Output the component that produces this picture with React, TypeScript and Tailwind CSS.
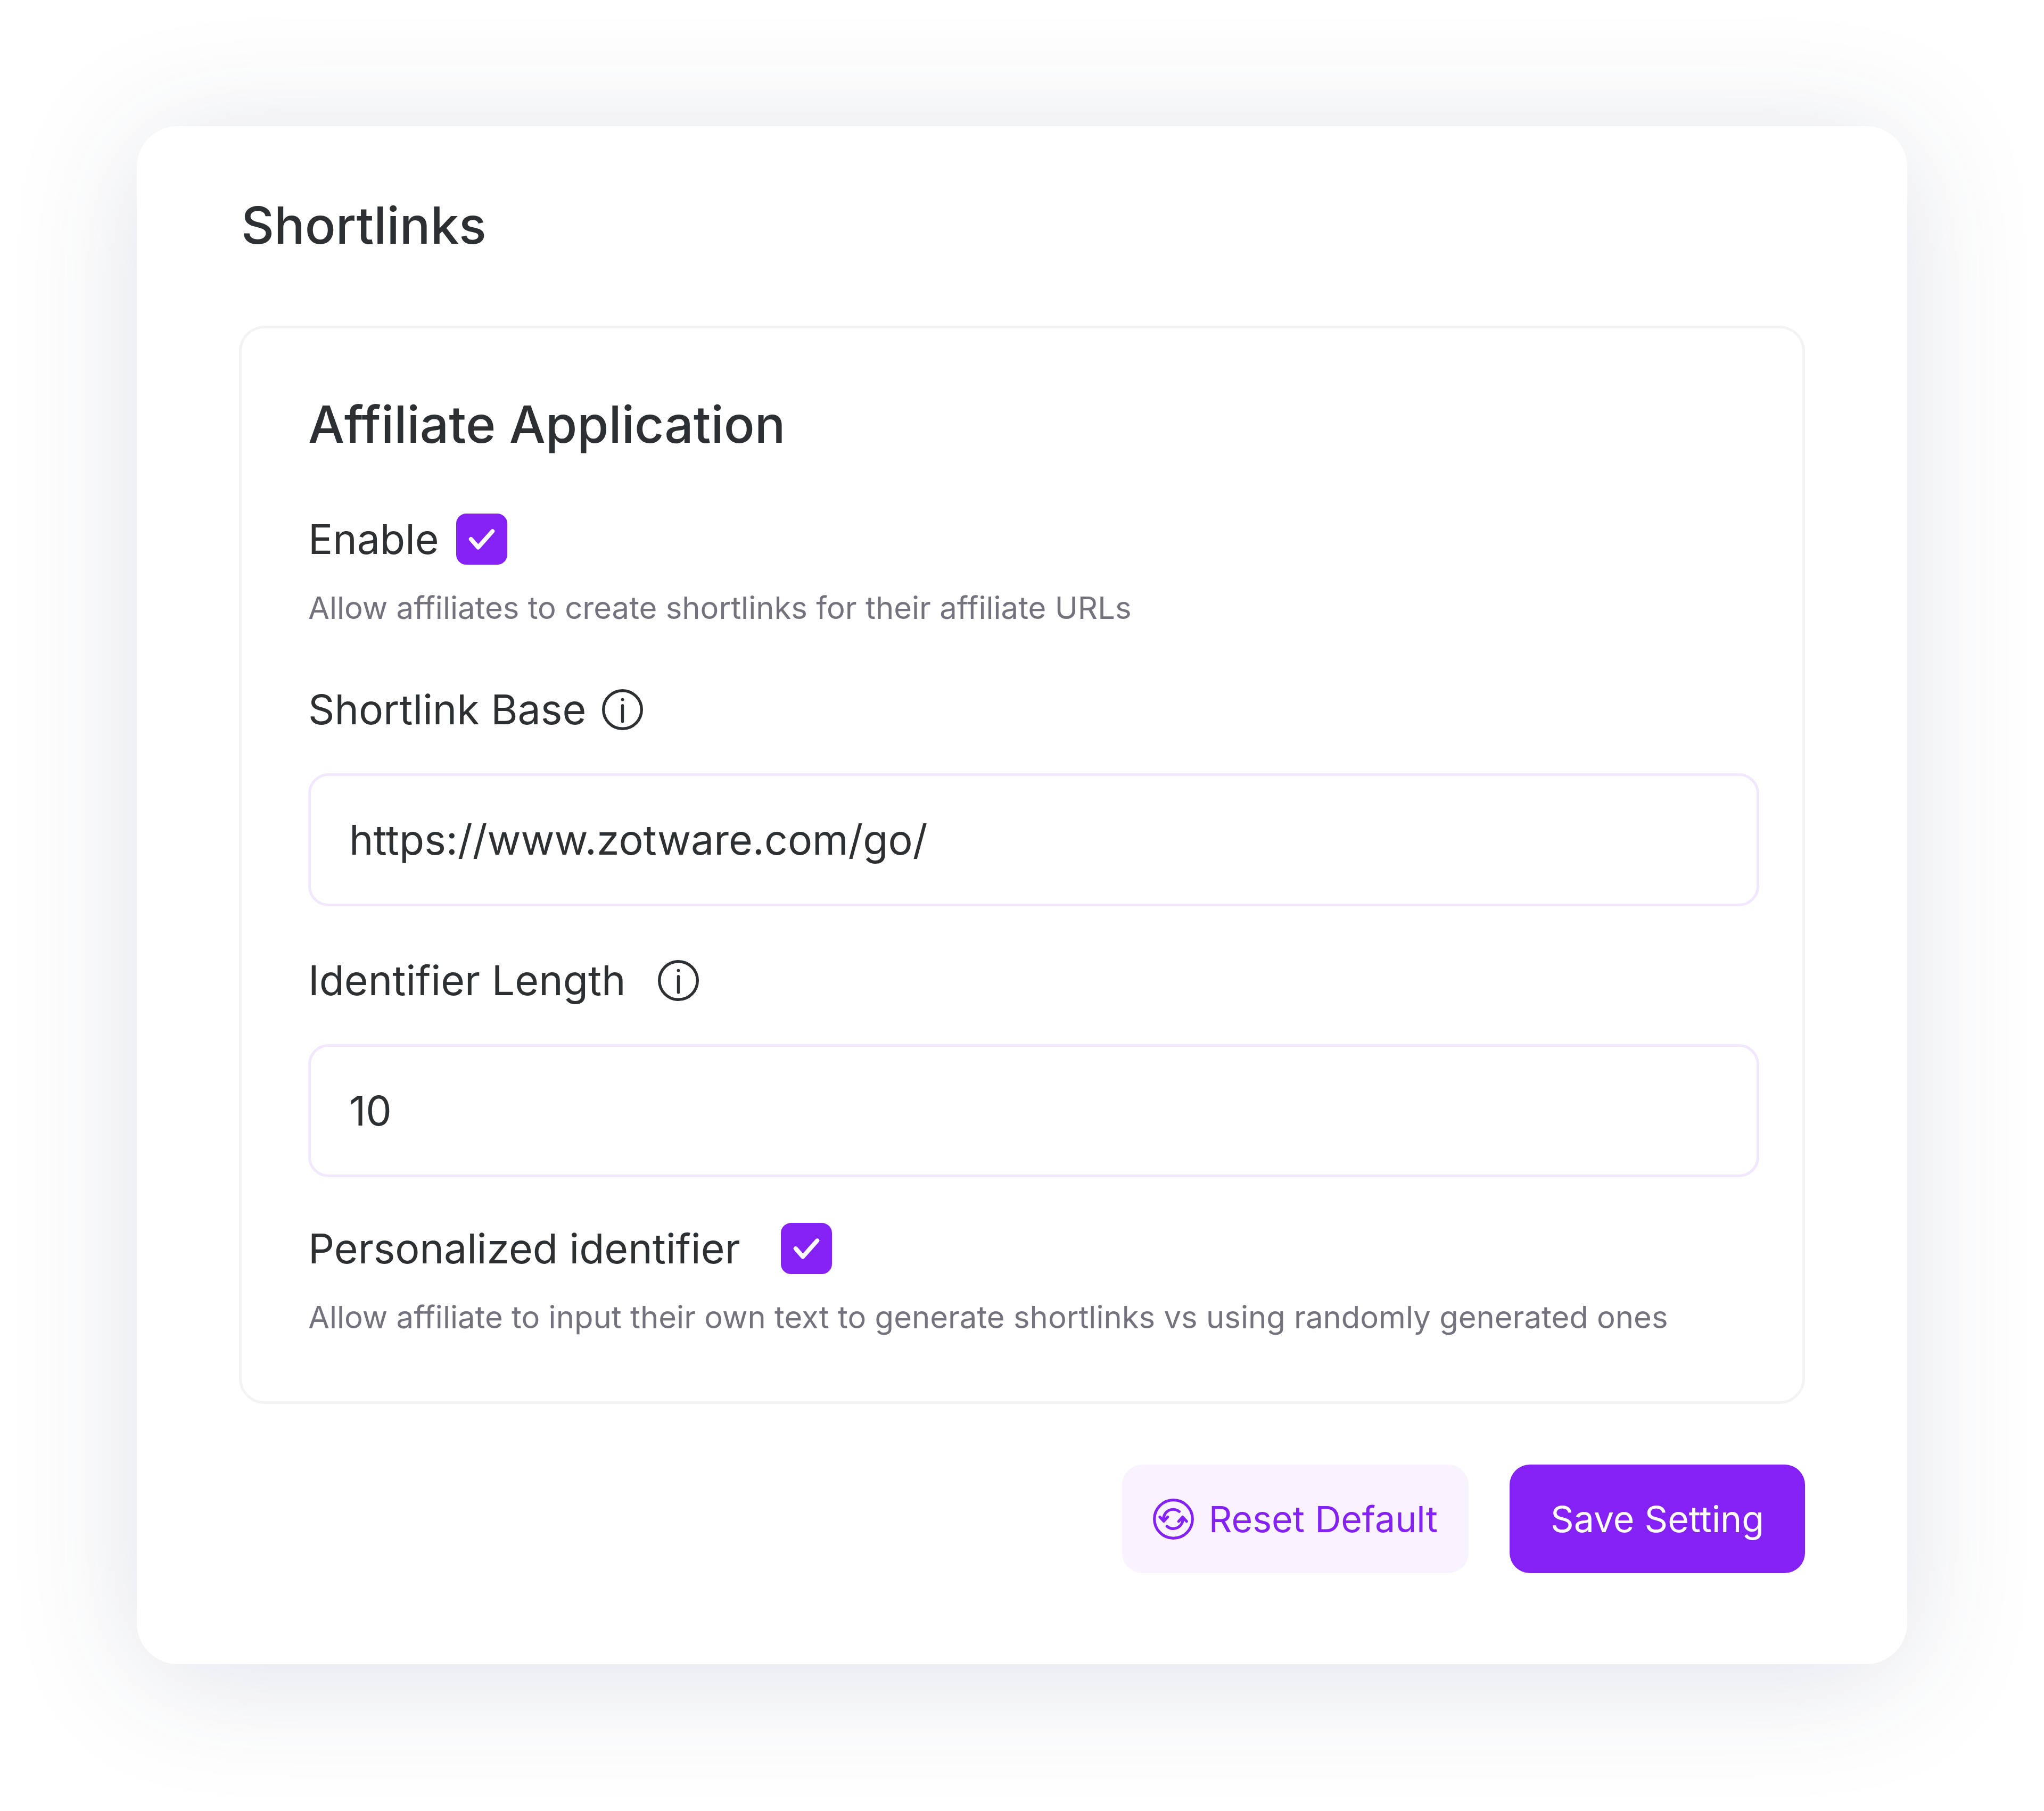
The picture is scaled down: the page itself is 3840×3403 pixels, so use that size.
import { useState } from 'react';
import type { ReactNode } from 'react';

const DEFAULT_SETTINGS = {
    enabled: true,
    base: 'https://www.zotware.com/go/',
    identifierLength: '10',
    personalized: true,
};

const InfoIcon = () => (
    <svg className="size-[77px] shrink-0" viewBox="0 0 77 77" fill="none" aria-hidden="true">
        <circle cx="38.5" cy="38.5" r="35.8" stroke="currentColor" strokeWidth="5.4" />
        <circle cx="38.5" cy="19.6" r="2.9" fill="currentColor" />
        <path d="M38.5 30.7V60.8" stroke="currentColor" strokeWidth="5.4" strokeLinecap="round" />
    </svg>
);

const ResetIcon = () => (
    <svg
        className="size-[77px] shrink-0"
        viewBox="0 0 77 77"
        fill="none"
        stroke="currentColor"
        strokeWidth="5.2"
        strokeLinecap="round"
        strokeLinejoin="round"
        aria-hidden="true"
    >
        <circle cx="38.5" cy="38.5" r="35.8" />
        <path d="M49.3 24.3A18 18 0 0 0 20.3 42" />
        <path d="M13 34.5L20.3 42.6L27.7 34.5" />
        <path d="M26.3 52A18 18 0 0 0 56 36" />
        <path d="M48.3 42.8L55.8 34.6L63.2 42.8" />
    </svg>
);

interface CheckboxProps {
    id: string;
    checked: boolean;
    onChange: (checked: boolean) => void;
}

const Checkbox = ({ id, checked, onChange }: CheckboxProps) => (
    <span className="relative flex size-24 shrink-0">
        <input
            id={id}
            type="checkbox"
            checked={checked}
            onChange={e => onChange(e.target.checked)}
            className="size-24 cursor-pointer appearance-none rounded-[19px] border-[5px] border-[#8422f5] bg-white checked:bg-[#8422f5]"
        />
        {checked && (
            <svg
                className="pointer-events-none absolute inset-0 size-24 text-white"
                viewBox="0 0 96 96"
                fill="none"
                aria-hidden="true"
            >
                <path
                    d="M27.8 48L41.3 63.5L68.3 33.2"
                    stroke="currentColor"
                    strokeWidth="8"
                    strokeLinecap="round"
                    strokeLinejoin="round"
                />
            </svg>
        )}
    </span>
);

interface TextFieldProps {
    id: string;
    label: string;
    value: string;
    rowClass: string;
    onChange: (value: string) => void;
}

const TextField = ({ id, label, value, rowClass, onChange }: TextFieldProps) => (
    <div>
        <div className={`flex items-center ${rowClass}`}>
            <label htmlFor={id} className="text-[77px] leading-[93px]">{label}</label>
            <InfoIcon />
        </div>
        <input
            id={id}
            type="text"
            value={value}
            onChange={e => onChange(e.target.value)}
            className="mt-[73px] block h-[250px] w-full rounded-[38px] border-[5px] border-[#f1e7ff] bg-transparent px-[72px] text-[77px] leading-[93px] outline-none focus:border-[#8422f5]"
        />
    </div>
);

const HelpText = ({ children }: { children: ReactNode }) => (
    <p className="mt-[46px] text-[58px] leading-[70px] text-[#75727d]">{children}</p>
);

export default function App() {

    const [settings, setSettings] = useState(DEFAULT_SETTINGS);

    return (
        <main className="min-h-screen bg-white px-[257px] pt-[237px] pb-[276px] font-['Inter',sans-serif] text-[#2c3033]">
            <form
                className="rounded-[77px] bg-white px-48 pt-32 pb-[171px] shadow-[0_24px_240px_rgba(38,55,95,0.15)]"
                onSubmit={e => e.preventDefault()}
            >
                <h1 className="pl-1 text-[96px] leading-[116px] font-medium">Shortlinks</h1>

                <section className="mt-[131px] rounded-[48px] border-[5px] border-[#f3f3f4] pt-[122px] pr-[81px] pb-[123px] pl-[125px]">
                    <h2 className="text-[96px] leading-[116px] font-medium">Affiliate Application</h2>

                    <div className="mt-[110px] flex items-center gap-8">
                        <label htmlFor="enable" className="text-[77px] leading-[93px]">Enable</label>
                        <Checkbox
                            id="enable"
                            checked={settings.enabled}
                            onChange={enabled => setSettings({ ...settings, enabled })}
                        />
                    </div>
                    <HelpText>Allow affiliates to create shortlinks for their affiliate URLs</HelpText>

                    <div className="mt-[110px] flex flex-col gap-[93px]">
                        <TextField
                            id="shortlink-base"
                            label="Shortlink Base"
                            value={settings.base}
                            rowClass="gap-[30px]"
                            onChange={base => setSettings({ ...settings, base })}
                        />
                        <TextField
                            id="identifier-length"
                            label="Identifier Length"
                            value={settings.identifierLength}
                            rowClass="gap-[60px]"
                            onChange={identifierLength => setSettings({ ...settings, identifierLength })}
                        />
                    </div>

                    <div className="mt-[86px] flex items-center gap-[76px]">
                        <label htmlFor="personalized" className="text-[77px] leading-[93px]">Personalized identifier</label>
                        <Checkbox
                            id="personalized"
                            checked={settings.personalized}
                            onChange={personalized => setSettings({ ...settings, personalized })}
                        />
                    </div>
                    <HelpText>
                        Allow affiliate to input their own text to generate shortlinks vs using randomly generated ones
                    </HelpText>
                </section>

                <div className="mt-[114px] flex justify-end gap-[77px] text-[68px] leading-[80px]">
                    <button
                        type="button"
                        onClick={() => setSettings(DEFAULT_SETTINGS)}
                        className="flex h-[204px] items-center gap-7 rounded-[38px] bg-[#f9f3ff] px-[58px] text-[#8422f5]"
                    >
                        <ResetIcon />
                        Reset Default
                    </button>
                    <button
                        type="submit"
                        className="h-[204px] rounded-[38px] bg-[#8422f5] px-[77px] text-white"
                    >
                        Save Setting
                    </button>
                </div>
            </form>
        </main>
    );
}
